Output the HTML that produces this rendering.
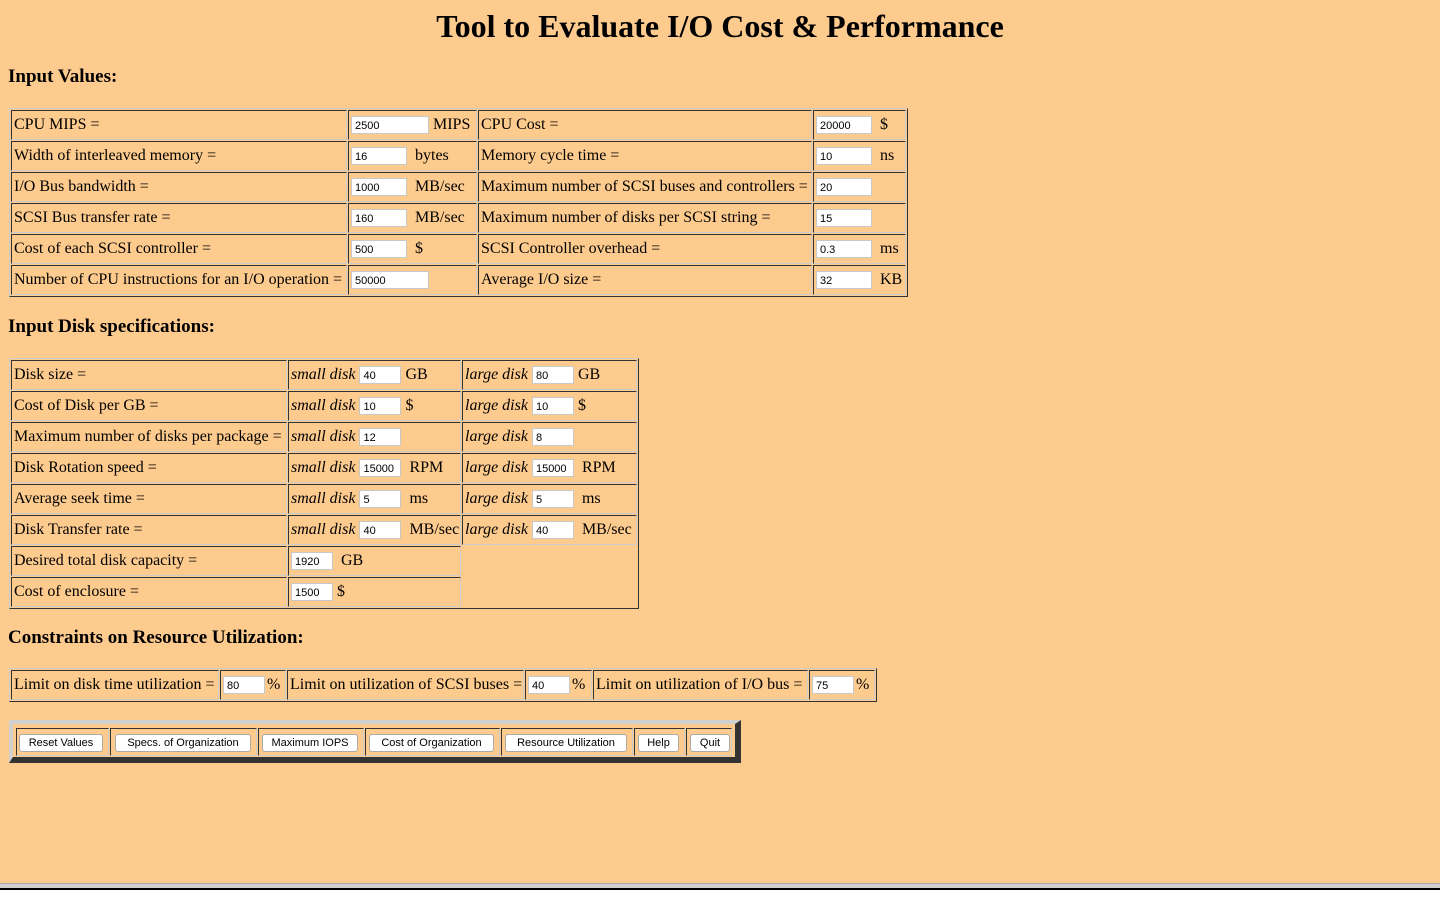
<!DOCTYPE html>
<html><head><meta charset="utf-8"><style>
html,body{margin:0;padding:0;}
body{width:1440px;height:900px;background:#fff;position:relative;font-family:"Liberation Serif",serif;font-size:16px;color:#000;overflow:hidden;}
#bg{position:absolute;left:0;top:0;width:1440px;height:883px;background:#FECB8E;}
#bar{position:absolute;left:0;top:883px;width:1440px;height:5px;background:#d0d0d0;border-top:1px solid #aaa;box-sizing:border-box;}
#line{position:absolute;left:0;top:888px;width:1440px;height:2px;background:#000;}
h1{position:absolute;left:0;width:1440px;top:8px;margin:0;text-align:center;font-size:32px;font-weight:bold;line-height:36px;}
h3{position:absolute;left:8px;margin:0;font-size:19px;font-weight:bold;line-height:22px;}
table{position:absolute;border-collapse:separate;border-spacing:1px;table-layout:fixed;border:1px solid;border-color:#ccc #333 #333 #ccc;}
td{box-sizing:border-box;height:30px;border:1px solid;border-color:#333 #ccc #ccc #333;padding:0 2px;white-space:nowrap;vertical-align:middle;line-height:18px;overflow:hidden;}
td.e{border:none;}
input{box-sizing:border-box;height:18px;border:1px solid #c8c8c8;background:#fff;font:11px "Liberation Sans",sans-serif;padding:1px 3px 0;vertical-align:middle;margin:0 4px 0 0;}
.w78{width:78px}.w56{width:56px}.w42{width:42px}
i{font-style:italic;margin-right:4px}
#btns{position:absolute;left:9px;top:720px;width:732px;height:43px;box-sizing:border-box;border-style:solid;border-width:4px 6px 6px 4px;border-color:#d0d0d0 #333 #333 #d0d0d0;}
#btns div.c{position:absolute;top:4px;height:28px;box-sizing:border-box;border:1px solid;border-color:#333 #ccc #ccc #333;}
button{position:absolute;top:10px;height:18px;box-sizing:border-box;background:#fff;border:1px solid #aaa;border-radius:3px;font:11px "Liberation Sans",sans-serif;padding:0;color:#000;}
</style></head><body>
<div id="bg"></div><div id="bar"></div><div id="line"></div>
<h1>Tool to Evaluate I/O Cost &amp; Performance</h1>
<h3 style="top:66px">Input Values:</h3>
<table style="left:9px;top:108px;width:899px">
<colgroup><col style="width:336px"><col style="width:129px"><col style="width:334px"><col style="width:93px"></colgroup>
<tr><td>CPU MIPS =</td><td><input class="w78" value="2500">MIPS</td><td>CPU Cost =</td><td><input class="w56" value="20000"> $</td></tr>
<tr><td>Width of interleaved memory =</td><td><input class="w56" value="16"> bytes</td><td>Memory cycle time =</td><td><input class="w56" value="10"> ns</td></tr>
<tr><td>I/O Bus bandwidth =</td><td><input class="w56" value="1000"> MB/sec</td><td>Maximum number of SCSI buses and controllers =</td><td><input class="w56" value="20"></td></tr>
<tr><td>SCSI Bus transfer rate =</td><td><input class="w56" value="160"> MB/sec</td><td>Maximum number of disks per SCSI string =</td><td><input class="w56" value="15"></td></tr>
<tr><td>Cost of each SCSI controller =</td><td><input class="w56" value="500"> $</td><td>SCSI Controller overhead =</td><td><input class="w56" value="0.3"> ms</td></tr>
<tr><td>Number of CPU instructions for an I/O operation =</td><td><input class="w78" value="50000"></td><td>Average I/O size =</td><td><input class="w56" value="32"> KB</td></tr>
</table>
<h3 style="top:316px">Input Disk specifications:</h3>
<table style="left:9px;top:358px;width:630px">
<colgroup><col style="width:276px"><col style="width:173px"><col style="width:175px"></colgroup>
<tr><td>Disk size =</td><td><i>small disk</i><input class="w42" value="40">GB</td><td><i>large disk</i><input class="w42" value="80">GB</td></tr>
<tr><td>Cost of Disk per GB =</td><td><i>small disk</i><input class="w42" value="10">$</td><td><i>large disk</i><input class="w42" value="10">$</td></tr>
<tr><td>Maximum number of disks per package =</td><td><i>small disk</i><input class="w42" value="12"></td><td><i>large disk</i><input class="w42" value="8"></td></tr>
<tr><td>Disk Rotation speed =</td><td><i>small disk</i><input class="w42" value="15000"> RPM</td><td><i>large disk</i><input class="w42" value="15000"> RPM</td></tr>
<tr><td>Average seek time =</td><td><i>small disk</i><input class="w42" value="5"> ms</td><td><i>large disk</i><input class="w42" value="5"> ms</td></tr>
<tr><td>Disk Transfer rate =</td><td><i>small disk</i><input class="w42" value="40"> MB/sec</td><td><i>large disk</i><input class="w42" value="40"> MB/sec</td></tr>
<tr><td>Desired total disk capacity =</td><td><input class="w42" value="1920"> GB</td><td class="e" rowspan="2"></td></tr>
<tr><td>Cost of enclosure =</td><td><input class="w42" value="1500">$</td></tr>
</table>
<h3 style="top:627px">Constraints on Resource Utilization:</h3>
<table style="left:9px;top:668px;width:868px">
<colgroup><col style="width:208px"><col style="width:66px"><col style="width:237px"><col style="width:67px"><col style="width:215px"><col style="width:66px"></colgroup>
<tr><td>Limit on disk time utilization =</td><td><input class="w42" value="80" style="margin-right:2px">%</td><td>Limit on utilization of SCSI buses =</td><td><input class="w42" value="40" style="margin-right:2px">%</td><td>Limit on utilization of I/O bus =</td><td><input class="w42" value="75" style="margin-right:2px">%</td></tr>
</table>
<div id="btns">
<div class="c" style="left:3px;width:93px"></div><button style="left:6px;width:84px">Reset Values</button>
<div class="c" style="left:97px;width:147px"></div><button style="left:102px;width:136px">Specs. of Organization</button>
<div class="c" style="left:245px;width:106px"></div><button style="left:249px;width:96px">Maximum IOPS</button>
<div class="c" style="left:352px;width:135px"></div><button style="left:356px;width:125px">Cost of Organization</button>
<div class="c" style="left:488px;width:132px"></div><button style="left:492px;width:122px">Resource Utilization</button>
<div class="c" style="left:621px;width:51px"></div><button style="left:625px;width:41px">Help</button>
<div class="c" style="left:673px;width:46px"></div><button style="left:677px;width:40px">Quit</button>
</div>
</body></html>
